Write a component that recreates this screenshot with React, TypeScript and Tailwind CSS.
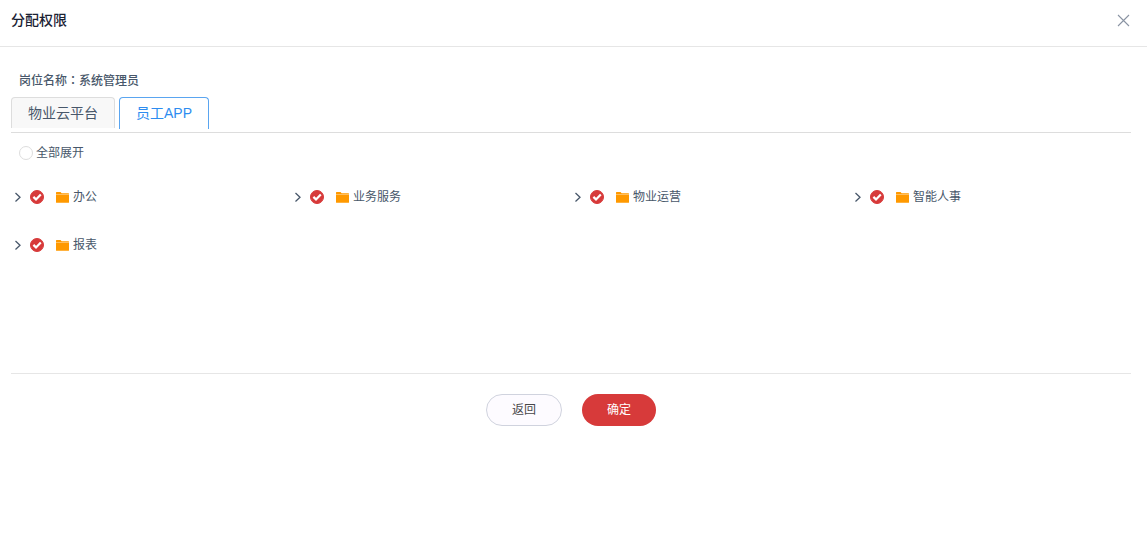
import { FC, useState } from 'react';

interface TreeNode {
  id: string;
  label: string;
}

const tabs = ['物业云平台', '员工APP'];

const nodes: TreeNode[] = [
  { id: 'office', label: '办公' },
  { id: 'service', label: '业务服务' },
  { id: 'operation', label: '物业运营' },
  { id: 'hr', label: '智能人事' },
  { id: 'report', label: '报表' },
];

const PermissionNode: FC<{ node: TreeNode }> = ({ node }) => {
  const [checked, setChecked] = useState(true);
  const [open, setOpen] = useState(false);

  return (
    <li className="flex h-12 items-center">
      <button
        type="button"
        aria-label={`展开${node.label}`}
        aria-expanded={open}
        onClick={() => setOpen(!open)}
        className="flex h-4 w-3.5 items-center justify-center text-[#48576a]"
      >
        <svg width="8" height="10" viewBox="0 0 8 10" fill="none" stroke="currentColor" strokeWidth="1.3">
          <path d="M1.5 1 6 5.2 1.5 9.4" />
        </svg>
      </button>
      <span className="ml-[5px] grid h-3.5 w-3.5">
        <input
          id={node.id}
          type="checkbox"
          checked={checked}
          onChange={(e) => setChecked(e.target.checked)}
          className="col-start-1 row-start-1 h-3.5 w-3.5 appearance-none rounded-full border border-[#d8dce5] checked:border-[#d73a3a] checked:bg-[#d73a3a]"
        />
        {checked && (
          <svg
            className="pointer-events-none col-start-1 row-start-1"
            width="14"
            height="14"
            viewBox="0 0 14 14"
            fill="none"
            stroke="#fff"
            strokeWidth="2.2"
          >
            <path d="M3.4 6.9 6 9.4 10.8 4.5" />
          </svg>
        )}
      </span>
      <label htmlFor={node.id} className="ml-3 flex items-center gap-1">
        <svg width="13" height="12" viewBox="0 0 13 12">
          <path d="M0 1.6Q0 1 .6 1H4.6L5.6 2.2H12.4Q13 2.2 13 2.7V3.2H0Z" fill="#ff9900" />
          <path d="M0 3.6H13V11.2Q13 11.8 12.4 11.8H.6Q0 11.8 0 11.2Z" fill="#ff9900" />
        </svg>
        {node.label}
      </label>
    </li>
  );
};

const App: FC = () => {
  const [activeTab, setActiveTab] = useState(1);

  return (
    <div className="min-h-screen bg-white font-['Liberation_Sans','Noto_Sans_CJK_SC',sans-serif] text-xs text-[#48576a]">
      <header className="flex h-[47px] items-center justify-between border-b border-[#e6e6e6] pr-[17px] pb-1.5 pl-[11px]">
        <h1 className="text-sm font-medium text-[#1a2233]">分配权限</h1>
        <button type="button" aria-label="关闭" className="text-[#8a94a3]">
          <svg width="13" height="13" viewBox="0 0 13 13" fill="none" stroke="currentColor" strokeWidth="1.1">
            <path d="M1 1 12 12M12 1 1 12" />
          </svg>
        </button>
      </header>

      <main className="pt-[25px] pr-4 pl-[11px]">
        <p className="px-2 leading-4 font-medium">
          岗位名称<span className="font-['Noto_Sans_CJK_TC']">：</span>系统管理员
        </p>

        <div role="tablist" className="mt-2 flex h-9 items-start gap-1 border-b border-[#dddddd]">
          {tabs.map((tab, index) => (
            <button
              key={tab}
              type="button"
              role="tab"
              aria-selected={activeTab === index}
              onClick={() => setActiveTab(index)}
              className={
                activeTab === index
                  ? 'h-8 rounded-t border border-b-0 border-[#5aa5f0] bg-white px-4 pb-0.5 text-sm text-[#2d8cf0]'
                  : 'h-[31px] rounded-t border border-b-0 border-[#dddddd] bg-[#f8f8f8] px-4 text-sm'
              }
            >
              {tab}
            </button>
          ))}
        </div>

        <label className="flex h-10 items-center gap-[3px] px-2">
          <input
            type="radio"
            name="expand"
            className="h-3.5 w-3.5 appearance-none rounded-full border border-[#dddddd] checked:border-4 checked:border-[#d73a3a]"
          />
          全部展开
        </label>

        <ul className="grid min-h-[200px] grid-cols-4 content-start">
          {nodes.map((node) => (
            <PermissionNode key={node.id} node={node} />
          ))}
        </ul>

        <footer className="flex justify-center gap-5 border-t border-[#e6e6e6] py-5">
          <button
            type="button"
            className="h-8 rounded-full border border-[#d0d3de] bg-[#fdfbff] px-[25px] text-[#48484a]"
          >
            返回
          </button>
          <button type="button" className="h-8 rounded-full bg-[#d73a3a] px-[25px] text-white">
            确定
          </button>
        </footer>
      </main>
    </div>
  );
};

export default App;
